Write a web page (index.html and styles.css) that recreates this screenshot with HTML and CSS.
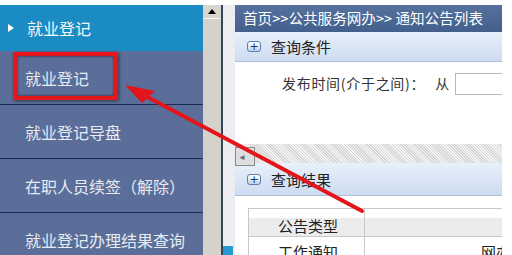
FILE: index.html
```html
<!DOCTYPE html>
<html lang="zh-CN">
<head>
    <meta charset="UTF-8">
    <title>通知公告列表</title>
    <link rel="stylesheet" href="styles.css">
</head>
<body>
    <div class="page">
        <aside class="sidebar">
            <div class="menu-head"><span class="tri"></span>就业登记</div>
            <div class="menu-item">就业登记<span class="mark"></span></div>
            <div class="menu-item">就业登记导盘</div>
            <div class="menu-item">在职人员续签（解除）</div>
            <div class="menu-item">就业登记办理结果查询</div>
        </aside>
        <div class="scrollbar">
            <div class="scroll-up"></div>
        </div>
        <div class="split"></div>
        <div class="strip"><span class="strip-tab"></span></div>
        <main class="content">
            <div class="crumb">首页&gt;&gt;公共服务网办&gt;&gt; 通知公告列表</div>
            <div class="panel-head"><span class="plus">+</span>查询条件</div>
            <div class="form">
                <span class="label">发布时间(介于之间)：</span>
                <span class="from">从</span>
                <span class="input"></span>
            </div>
            <div class="hatch"><span class="hatch-btn">◄</span></div>
            <div class="panel-head tall"><span class="plus">+</span>查询结果</div>
            <div class="table">
                <div class="row head">
                    <div class="cell first">公告类型</div>
                    <div class="cell"></div>
                </div>
                <div class="row">
                    <div class="cell first">工作通知</div>
                    <div class="cell right">网办</div>
                </div>
            </div>
        </main>
        <div class="gutter"></div>
    </div>
    <svg class="arrow" width="512" height="255" viewBox="0 0 512 255">
        <line x1="362" y1="211" x2="140" y2="93" stroke="#e3141a" stroke-width="4" stroke-linecap="round"/>
        <polygon points="125,85 155,91 142,103" fill="#e3141a"/>
    </svg>
</body>
</html>
```

FILE: styles.css
```css
body {
    margin: 0;
    background-color: #ffffff;
    font-family: "Noto Sans CJK SC", "Noto Sans", sans-serif;
    overflow: hidden;
}
.page {
    display: flex;
    height: 250px;
    padding-top: 5px;
    overflow: hidden;
}
.sidebar {
    width: 203px;
    flex-shrink: 0;
    background-color: #5a6e99;
    color: #e6ebf4;
    font-size: 16px;
}
.menu-head {
    height: 46px;
    display: flex;
    align-items: center;
    padding-left: 8px;
    background-color: #1b8bc3;
    color: #f4f8fc;
}
.tri {
    width: 0;
    height: 0;
    border-top: 4px solid transparent;
    border-bottom: 4px solid transparent;
    border-left: 6px solid #ffffff;
    margin-right: 13px;
}
.menu-item {
    height: 53px;
    display: flex;
    align-items: center;
    padding-left: 25px;
    border-bottom: 1px solid #1a2a55;
    position: relative;
}
.mark {
    position: absolute;
    left: 13px;
    top: 1px;
    width: 97px;
    height: 40px;
    border: 4px solid #e4181c;
    box-shadow: inset 0 0 3px #3a2030, 1px 1px 3px rgba(0, 0, 0, 0.5);
}
.scrollbar {
    width: 18px;
    flex-shrink: 0;
    background-color: #d5d2cc;
}
.scroll-up {
    height: 13px;
    background-color: #d8d5cf;
    border-bottom: 1px solid #f6f6f6;
    position: relative;
}
.scroll-up::after {
    content: "";
    position: absolute;
    left: 5px;
    top: 4px;
    border-left: 4px solid transparent;
    border-right: 4px solid transparent;
    border-bottom: 5px solid #000000;
}
.split {
    width: 2px;
    flex-shrink: 0;
    background-color: #34465c;
}
.strip {
    width: 12px;
    flex-shrink: 0;
    background-color: #ebedf1;
    display: flex;
    flex-direction: column;
    justify-content: flex-end;
}
.strip-tab {
    height: 9px;
    width: 10px;
    background-color: #279ad2;
}
.content {
    width: 267px;
    flex-shrink: 0;
    overflow: hidden;
    font-size: 14px;
    color: #222222;
}
.gutter {
    flex: 1;
}
.crumb {
    height: 27px;
    line-height: 26px;
    padding-left: 8px;
    font-size: 14.6px;
    white-space: nowrap;
    color: #ffffff;
    background: linear-gradient(#55719d, #435f8c);
}
.panel-head {
    height: 29px;
    display: flex;
    align-items: center;
    padding-left: 12px;
    font-size: 15px;
    background: linear-gradient(#e8f0fb, #cddcf0);
    border-bottom: 1px solid #a9c0dc;
}
.panel-head.tall {
    height: 32px;
}
.plus {
    width: 12px;
    height: 9px;
    margin-right: 10px;
    border: 1px solid #5b7fae;
    border-radius: 3px;
    background: linear-gradient(#ffffff, #bcd2ee);
    color: #1a3a6a;
    font-size: 11px;
    line-height: 9px;
    text-align: center;
    font-family: "DejaVu Sans", sans-serif;
}
.form {
    height: 82px;
    display: flex;
    align-items: flex-start;
    padding-top: 11px;
    padding-left: 47px;
    font-size: 14px;
    white-space: nowrap;
    color: #333333;
    box-sizing: border-box;
}
.label {
    line-height: 21px;
    letter-spacing: 0.7px;
}
.from {
    line-height: 21px;
    margin-left: 10px;
}
.input {
    width: 80px;
    height: 20px;
    margin-left: 6px;
    border: 1px solid #b8b8b8;
    flex-shrink: 0;
}
.hatch {
    height: 19px;
    background: repeating-linear-gradient(45deg, #d6d6d6 0 1px, #f4f4f4 1px 2px);
}
.hatch-btn {
    display: inline-block;
    width: 16px;
    height: 17px;
    border: 1px solid #8a8a8a;
    background-color: #dedede;
    color: #666666;
    font-size: 8px;
    line-height: 17px;
    padding-left: 2px;
    box-sizing: content-box;
}
.table {
    margin: 12px 0 0 13px;
    width: 254px;
    border: 1px solid #c8c8c8;
    border-right: none;
}
.row {
    display: flex;
    height: 24px;
    border-bottom: 1px solid #c8c8c8;
}
.row.head {
    height: 27px;
    background: linear-gradient(#ffffff 0 33%, #ececec 33%);
}
.cell {
    flex: 1;
    padding-left: 0;
    padding-top: 6px;
    white-space: nowrap;
    overflow: hidden;
    font-size: 15px;
    line-height: 18px;
}
.row.head .cell {
    padding-top: 8px;
}
.cell.first {
    flex: none;
    width: 86px;
    padding-left: 29px;
    box-sizing: content-box;
    border-right: 1px solid #c8c8c8;
}
.cell.right {
    padding-left: 116px;
}
.arrow {
    position: absolute;
    left: 0;
    top: 0;
    pointer-events: none;
}
```
